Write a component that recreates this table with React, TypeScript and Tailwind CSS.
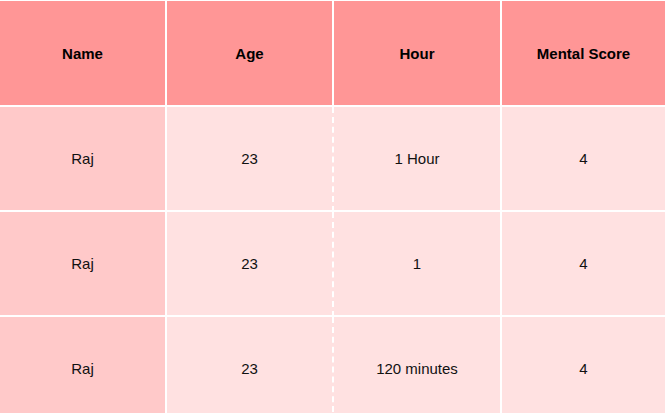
const rows = [
  { name: 'Raj', age: '23', hour: '1 Hour', score: '4' },
  { name: 'Raj', age: '23', hour: '1', score: '4' },
  { name: 'Raj', age: '23', hour: '120 minutes', score: '4' },
]

const headers = ['Name', 'Age', 'Hour', 'Mental Score']

export default function App() {
  return (
    <div
      className="h-[413px] w-[665px] overflow-hidden bg-white border-t border-white text-[15px] text-[#111]"
      style={{ fontFamily: '"Liberation Sans", Arial, sans-serif' }}
    >
      <div className="grid grid-cols-[167px_167px_168px_1fr]">
        {headers.map((h, i) => (
          <div
            key={h}
            className={`flex h-[106px] items-center justify-center border-b-2 border-white bg-[#ff9696] pt-[2px] font-bold text-black ${
              i < 3 ? 'border-r-2' : ''
            }`}
          >
            {h}
          </div>
        ))}
        {rows.map((r, idx) => (
          <Row key={idx} row={r} />
        ))}
      </div>
    </div>
  )
}

function Row({ row }: { row: { name: string; age: string; hour: string; score: string } }) {
  return (
    <>
      <div className="flex h-[105px] items-center justify-center border-b-2 border-r-2 border-white bg-[#ffc9c9] pt-[2px]">
        {row.name}
      </div>
      <div className="flex h-[105px] items-center justify-center border-b-2 border-r-2 border-white [border-right-style:dashed] bg-[#ffe1e1] pt-[2px]">
        {row.age}
      </div>
      <div className="flex h-[105px] items-center justify-center border-b-2 border-r-2 border-white bg-[#ffe1e1] pt-[2px]">
        {row.hour}
      </div>
      <div className="flex h-[105px] items-center justify-center border-b-2 border-white bg-[#ffe1e1] pt-[2px]">
        {row.score}
      </div>
    </>
  )
}
